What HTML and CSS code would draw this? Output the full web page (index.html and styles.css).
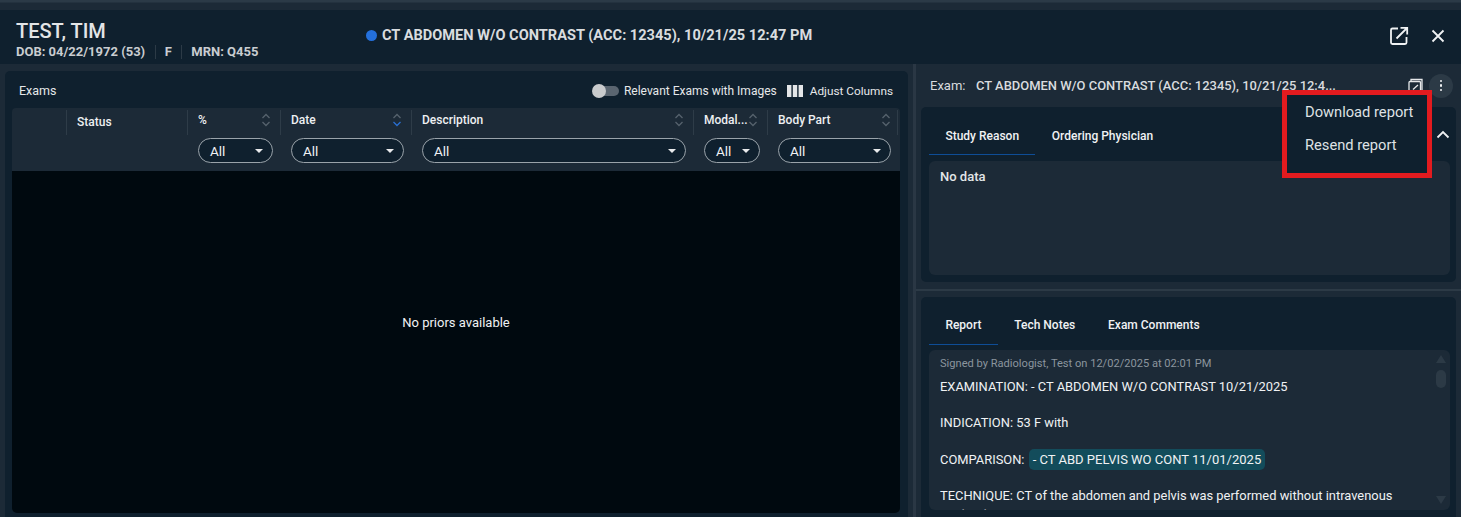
FILE: index.html
```html
<!DOCTYPE html>
<html lang="en">
<head>
<meta charset="utf-8">
<title>TEST, TIM</title>
<link rel="stylesheet" href="styles.css">
</head>
<body>
<div class="topline"></div>
<header class="header">
  <div class="patient">
    <div class="name">TEST, TIM</div>
    <div class="meta"><span>DOB: 04/22/1972 (53)</span><span class="sep">F</span><span class="sep">MRN: Q455</span></div>
  </div>
  <div class="current"><i class="dot"></i>CT ABDOMEN W/O CONTRAST (ACC: 12345), 10/21/25 12:47 PM</div>
  <div class="head-actions">
    <svg class="ico" width="20" height="20" viewBox="0 0 20 20" fill="none" stroke="#f0f2f4" stroke-width="1.8"><path d="M9 2.5H3.5a1.5 1.5 0 0 0-1.500 1.500v12.500a1.500 1.500 0 0 0 1.500 1.500H16a1.500 1.500 0 0 0 1.500-1.500V11"/><path d="M7.500 12.500 17.500 2.500M11.500 1.800h6.700v6.700"/></svg>
    <svg class="ico" width="16" height="16" viewBox="0 0 16 16" fill="none" stroke="#f0f2f4" stroke-width="1.800"><path d="M2.500 2.500l11 11M13.500 2.500l-11 11"/></svg>
  </div>
</header>
<main class="main">
  <section class="left">
    <div class="toolbar">
      <span class="exams">Exams</span>
      <span class="switch"><i class="track"></i><i class="knob"></i></span>
      <span class="tool-label">Relevant Exams with Images</span>
      <svg class="cols" width="16" height="12" viewBox="0 0 16 12" fill="#e4e6e8"><rect width="4.400" height="12"/><rect x="5.800" width="4.400" height="12"/><rect x="11.600" width="4.400" height="12"/></svg>
      <span class="tool-label adjust">Adjust Columns</span>
    </div>
    <div class="table">
      <div class="thead">
        <div class="th th-empty"></div>
        <div class="th th-status"><span class="lbl status-lbl">Status</span></div>
        <div class="th">
          <div class="th-top"><span class="lbl">%</span><svg class="sort" width="10" height="14" viewBox="0 0 10 14" fill="none" stroke="#56626d" stroke-width="1.300"><path d="M1.500 5 5 1.500 8.500 5M1.500 9 5 12.500 8.500 9"/></svg></div>
          <div class="pill"><span>All</span><i class="caret"></i></div>
        </div>
        <div class="th">
          <div class="th-top"><span class="lbl">Date</span><svg class="sort" width="10" height="14" viewBox="0 0 10 14" fill="none" stroke-width="1.300"><path stroke="#56626d" d="M1.500 5 5 1.500 8.500 5"/><path stroke="#2a6fd0" d="M1.500 9 5 12.500 8.500 9"/></svg></div>
          <div class="pill"><span>All</span><i class="caret"></i></div>
        </div>
        <div class="th">
          <div class="th-top"><span class="lbl">Description</span><svg class="sort" width="10" height="14" viewBox="0 0 10 14" fill="none" stroke="#56626d" stroke-width="1.300"><path d="M1.500 5 5 1.500 8.500 5M1.500 9 5 12.500 8.500 9"/></svg></div>
          <div class="pill"><span>All</span><i class="caret"></i></div>
        </div>
        <div class="th">
          <div class="th-top"><span class="lbl">Modal...</span><svg class="sort" width="10" height="14" viewBox="0 0 10 14" fill="none" stroke="#56626d" stroke-width="1.300"><path d="M1.500 5 5 1.500 8.500 5M1.500 9 5 12.500 8.500 9"/></svg></div>
          <div class="pill"><span>All</span><i class="caret"></i></div>
        </div>
        <div class="th th-last">
          <div class="th-top"><span class="lbl">Body Part</span><svg class="sort" width="10" height="14" viewBox="0 0 10 14" fill="none" stroke="#56626d" stroke-width="1.300"><path d="M1.500 5 5 1.500 8.500 5M1.500 9 5 12.500 8.500 9"/></svg></div>
          <div class="pill"><span>All</span><i class="caret"></i></div>
        </div>
      </div>
      <div class="tbody">No priors available</div>
    </div>
  </section>
  <div class="vsplit"></div>
  <section class="right">
    <div class="exam-bar">
      <span class="exam-label">Exam:</span>
      <span class="exam-title">CT ABDOMEN W/O CONTRAST (ACC: 12345), 10/21/25 12:4...</span>
      <svg class="exam-ico" width="16" height="16" viewBox="0 0 16 16" fill="none" stroke="#e6e8ea" stroke-width="1.300"><path d="M3 3V1.500h11V12"/><rect x="1" y="3.500" width="11.500" height="11" rx="1"/><path d="M5 11.500 10 7"/></svg>
      <span class="more"><i></i><i></i><i></i></span>
    </div>
    <div class="panel panel-top">
      <div class="tabs">
        <span class="tab active">Study Reason</span>
        <span class="tab">Ordering Physician</span>
        <svg class="chev" width="14" height="9" viewBox="0 0 14 9" fill="none" stroke="#eef0f2" stroke-width="1.800"><path d="M1.500 7.500 7 2l5.500 5.500"/></svg>
      </div>
      <div class="inner nodata">No data</div>
    </div>
    <div class="hsplit"></div>
    <div class="panel panel-bottom">
      <div class="tabs">
        <span class="tab active">Report</span>
        <span class="tab">Tech Notes</span>
        <span class="tab">Exam Comments</span>
      </div>
      <div class="inner report">
        <div class="report-text">
          <div class="signed">Signed by Radiologist, Test on 12/02/2025 at 02:01 PM</div>
          <p>EXAMINATION: - CT ABDOMEN W/O CONTRAST 10/21/2025</p>
          <p>INDICATION: 53 F with</p>
          <p>COMPARISON: <span class="chip">- CT ABD PELVIS WO CONT 11/01/2025</span></p>
          <p>TECHNIQUE: CT of the abdomen and pelvis was performed without intravenous contrast.</p>
        </div>
        <div class="scrollbar"><i class="arrow up"></i><i class="thumb"></i><i class="arrow down"></i></div>
      </div>
    </div>
  </section>
</main>
<div class="menu">
  <div class="menu-item">Download report</div>
  <div class="menu-item">Resend report</div>
</div>
</body>
</html>
```
FILE: styles.css
```css
* { box-sizing: border-box; }
html, body { margin: 0; height: 517px; overflow: hidden; }
body { background: #1c2a37; font-family: Roboto, "Liberation Sans", sans-serif; color: #eceff1; position: relative; }
i { display: block; }
.topline { height: 10px; background: linear-gradient(#2b3a47 0, #2b3a47 2px, #1c2a37 3px); }
.header { height: 54px; background: #0f202e; display: flex; padding: 0 15px 0 16px; position: relative; }
.patient { width: 350px; }
.name { font-size: 20px; line-height: 24px; margin-top: 9px; font-weight: 500; color: #e3e5e7; }
.meta { display: flex; font-size: 13px; font-weight: 700; color: #c9cdd1; line-height: 14px; margin-top: 2px; }
.sep { margin-left: 9.500px; padding-left: 9px; border-left: 1px solid #2c3a46; }
.current { display: flex; align-items: center; font-size: 14.600px; font-weight: 700; color: #d9dcdf; height: 18px; margin-top: 16px; }
.dot { width: 11px; height: 11px; border-radius: 50%; background: #2470dc; margin-right: 5px; }
.head-actions { margin-left: auto; display: flex; align-items: center; gap: 21px; padding: 0 0 3px; }
.main { display: flex; height: 453px; }
.left { width: 903px; margin: 7px 0 0 5px; background: #0f202e; border-radius: 5px 5px 0 0; height: 446px; display: flex; flex-direction: column; }
.toolbar { height: 37px; flex: none; display: flex; align-items: center; padding: 2px 15px 0 14px; font-size: 12px; color: #e6e8ea; }
.exams { margin-right: auto; font-size: 12.500px; }
.adjust { font-size: 11.800px; }
.switch { width: 27px; height: 14px; position: relative; margin-right: 5px; }
.track { position: absolute; left: 3px; right: 0; top: 2px; height: 10px; border-radius: 5px; background: #5a6570; }
.knob { position: absolute; left: 0; top: 0; width: 14px; height: 14px; border-radius: 50%; background: #c9cbcd; }
.cols { margin: 0 7px 0 10px; }
.table { margin: 0 8px 4px 7px; flex: 1; display: flex; flex-direction: column; min-height: 0; }
.thead { height: 63px; flex: none; background: #1c2a37; display: grid; grid-template-columns: 54px 121px 93px 131px 282px 74px 133px; border-radius: 4px 4px 0 0; }
.th { position: relative; padding: 0 0 0 11px; }
.th::before { content: ""; position: absolute; left: 0; top: 2px; height: 25px; width: 1px; background: #2e3c48; }
.th-empty::before { display: none; }
.th-last::after { content: ""; position: absolute; left: 130px; top: 2px; height: 25px; width: 1px; background: #2e3c48; }
.th-top { display: flex; align-items: center; justify-content: space-between; height: 24px; padding-right: 9px; margin-bottom: 6px; }
.th-last .th-top { padding-right: 9px; width: 122px; }
.lbl { font-size: 12px; font-weight: 500; color: #eef0f2; line-height: 24px; }
.status-lbl { display: block; margin-top: 2px; }
.sort { flex: none; }
.pill { width: calc(100% - 7px); height: 25px; border: 1px solid #9aa3aa; border-radius: 13px; background: #0f202e; display: flex; align-items: center; justify-content: space-between; padding: 0 8px 0 11px; font-size: 13.500px; color: #f0f2f4; }
.th-last .pill { width: 113px; }
.caret { width: 0; height: 0; border: 4px solid transparent; border-top: 4px solid #e8eaec; border-bottom: 0; margin-right: 1px; }
.tbody { flex: 1; background: #00090f; border-radius: 0 0 5px 5px; display: flex; align-items: center; justify-content: center; font-size: 13px; color: #f0f2f4; padding-bottom: 40px; }
.vsplit { width: 8px; flex: none; border-left: 5px solid #1c2a37; background: #2a3744; }
.right { flex: 1; display: flex; flex-direction: column; min-width: 0; border-left: 5px solid #1c2a37; }
.exam-bar { height: 43px; flex: none; display: flex; align-items: center; padding: 0 8px 0 9px; font-size: 13px; color: #d9dcdf; }
.exam-label { width: 46px; }
.exam-title { flex: 1; font-weight: 500; font-size: 12.950px; }
.exam-ico { margin-right: 5px; }
.more { width: 24px; height: 24px; border-radius: 50%; background: #2c3a46; display: flex; flex-direction: column; align-items: center; justify-content: center; gap: 2px; }
.more i { width: 2.500px; height: 2.500px; border-radius: 50%; background: #f0f2f4; }
.panel { background: #0f202e; border-radius: 5px; margin-right: 5px; padding: 0 6px 7px 8px; }
.panel-top { height: 175px; }
.panel-bottom { height: 220px; border-radius: 5px 5px 0 0; }
.hsplit { height: 15px; flex: none; background: linear-gradient(transparent 7px, #2c3a46 7px, #2c3a46 9px, transparent 9px); margin-left: -5px; }
.tabs { display: flex; height: 48px; position: relative; font-size: 12px; font-weight: 500; color: #f0f2f4; }
.tab { height: 100%; display: flex; align-items: center; padding: 10px 16.400px 0; }
.active { border-bottom: 1px solid #0e4d96; }
.chev { position: absolute; right: 0; top: 23px; }
.panel-top .tabs { margin-bottom: 6px; }
.panel-bottom .tabs { margin-bottom: 5px; }
.panel-bottom .tab { padding-top: 8px; }
.inner { background: #1c2a37; border-radius: 6px; }
.nodata { height: 114px; padding: 8px 11px; font-size: 13px; font-weight: 500; color: #e3e6e8; line-height: 16px; }
.report { height: 160px; display: flex; padding: 6px 4px 0 11px; overflow: hidden; }
.report-text { flex: 1; font-size: 12.900px; line-height: 18.200px; color: #f0f2f4; min-width: 0; padding-right: 30px; }
.report-text p { margin: 0 0 18.200px; }
.signed { font-size: 11.100px; line-height: 16px; color: #8b959e; margin-bottom: 6px; }
.chip { background: #134c5b; border-radius: 5px; padding: 3px 4px; margin-left: 1px; font-size: 13px; }
.scrollbar { width: 10px; flex: none; display: flex; flex-direction: column; align-items: center; height: 149px; margin-top: -1px; }
.arrow { width: 0; height: 0; border: 5px solid transparent; }
.up { border-bottom: 8px solid #2c3a46; border-top: 0; }
.thumb { width: 10px; height: 18px; border-radius: 5px; background: #2c3a46; margin-top: 7px; }
.down { border-top: 8px solid #2c3a46; border-bottom: 0; margin-top: auto; }
.menu { position: absolute; left: 1282px; top: 90px; width: 150px; height: 88px; background: #0f202e; border: 5px solid #e31b1f; padding: 0 0 0 18px; font-size: 14.700px; color: #dfe2e5; }
.menu-item { height: 33px; display: flex; align-items: center; }
```
